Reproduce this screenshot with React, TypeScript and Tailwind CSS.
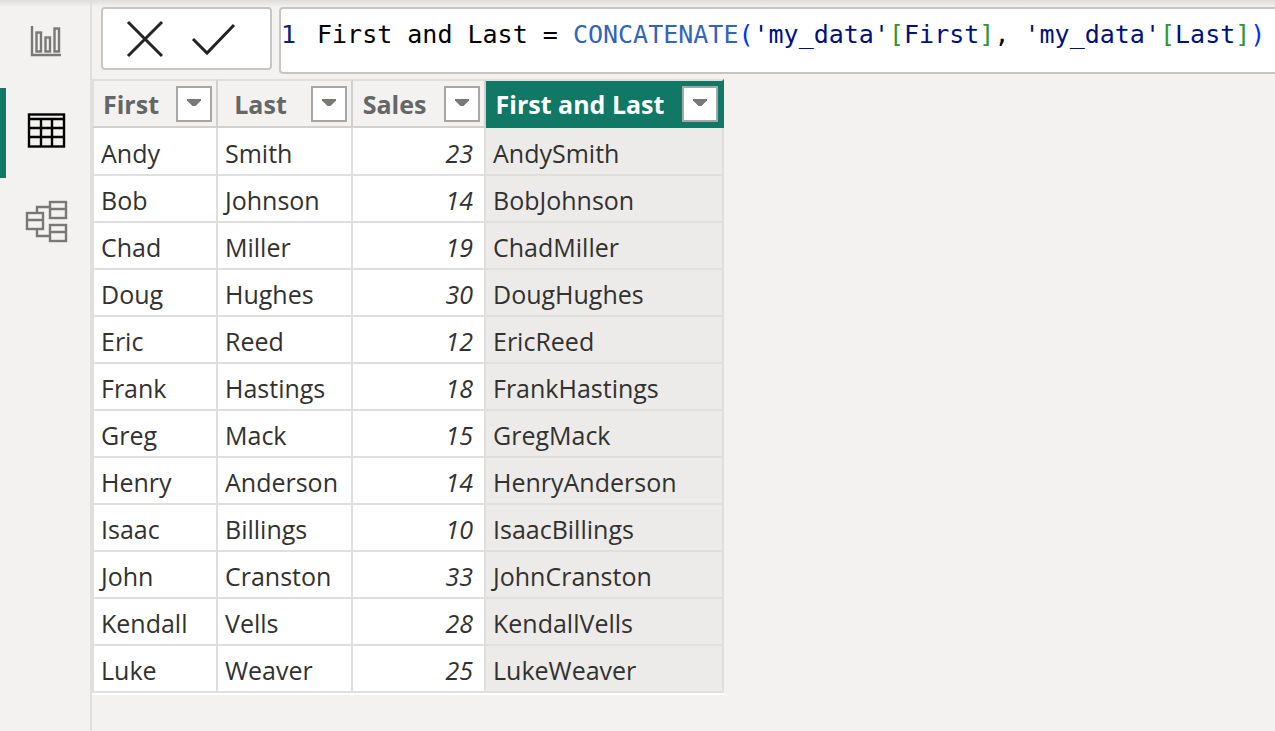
import type { ReactNode } from 'react'

interface Row {
  first: string
  last: string
  sales: number
}

const rows: Row[] = [
  { first: 'Andy', last: 'Smith', sales: 23 },
  { first: 'Bob', last: 'Johnson', sales: 14 },
  { first: 'Chad', last: 'Miller', sales: 19 },
  { first: 'Doug', last: 'Hughes', sales: 30 },
  { first: 'Eric', last: 'Reed', sales: 12 },
  { first: 'Frank', last: 'Hastings', sales: 18 },
  { first: 'Greg', last: 'Mack', sales: 15 },
  { first: 'Henry', last: 'Anderson', sales: 14 },
  { first: 'Isaac', last: 'Billings', sales: 10 },
  { first: 'John', last: 'Cranston', sales: 33 },
  { first: 'Kendall', last: 'Vells', sales: 28 },
  { first: 'Luke', last: 'Weaver', sales: 25 },
]

const columns = [
  { name: 'First', width: 'w-[126px]' },
  { name: 'Last', width: 'w-[135px]' },
  { name: 'Sales', width: 'w-[133px]' },
  { name: 'First and Last', width: 'w-[238px]', selected: true },
]

function ViewButton({ label, active, children }: { label: string; active?: boolean; children: ReactNode }) {
  return (
    <button
      type="button"
      aria-label={label}
      aria-pressed={!!active}
      className={`flex h-[90px] w-full items-center border-l-6 pl-4 ${
        active ? 'border-[#117865] text-black' : 'border-transparent text-[#7a7876]'
      }`}
    >
      <svg width="48" height="48" viewBox="0 0 48 48" fill="none" stroke="currentColor" strokeWidth="2.4">
        {children}
      </svg>
    </button>
  )
}

function Sidebar() {
  return (
    <nav aria-label="Views" className="-mt-[2px] w-[92px] shrink-0 border-r-2 border-[#e1dfdd]">
      <ViewButton label="Report view">
        <path d="M10 7V36H39" />
        <rect x="14.5" y="13.5" width="4.5" height="19" />
        <rect x="23.5" y="18.5" width="4.5" height="14" />
        <rect x="32.5" y="9.5" width="4.5" height="23" />
      </ViewButton>
      <ViewButton label="Table view" active>
        <rect x="7" y="5.5" width="35" height="32" />
        <path d="M7 10H42M7 19H42M7 28H42M19 10V38M30 10V38" />
      </ViewButton>
      <ViewButton label="Model view">
        <rect x="5" y="14" width="16" height="16" />
        <rect x="28" y="3" width="16" height="16" />
        <rect x="28" y="26" width="16" height="16" />
        <path d="M5 21H21M28 10H44M28 33H44M28 8H15V14M15 30V37H28" />
      </ViewButton>
    </nav>
  )
}

function FormulaBar() {
  return (
    <div className="flex items-start gap-[7px] pt-[7px] pl-[9px]">
      <div className="flex h-[63px] w-[171px] shrink-0 items-center rounded border-2 border-[#c8c6c4] bg-white pl-4">
        <button type="button" aria-label="Cancel" className="flex h-14 w-[52px] items-center justify-center">
          <svg width="40" height="40" viewBox="0 0 40 40" fill="none" stroke="#252423" strokeWidth="3">
            <path d="M3 3L37 37M37 3L3 37" />
          </svg>
        </button>
        <button type="button" aria-label="Commit" className="ml-4 flex h-14 w-[52px] items-center justify-center">
          <svg width="46" height="40" viewBox="0 0 46 40" fill="none" stroke="#252423" strokeWidth="3">
            <path d="M3 20L17 34L44 6" />
          </svg>
        </button>
      </div>
      <div className="flex h-[67px] min-w-0 flex-1 overflow-hidden rounded-l border-2 border-r-0 border-[#c8c6c4] bg-white pt-[9px] font-['DejaVu_Sans_Mono',monospace] text-[25px] leading-[34px] whitespace-pre">
        <span className="w-9 shrink-0 text-[#0b216f]">1</span>
        <code
          role="textbox"
          aria-label="Formula"
          contentEditable
          suppressContentEditableWarning
          spellCheck={false}
          className="font-['DejaVu_Sans_Mono',monospace] text-black"
        >
          First and Last = <span className="text-[#3165bb]">CONCATENATE</span>
          <span className="text-[#0431fa]">(</span>
          <span className="text-[#001080]">'my_data'</span>
          <span className="text-[#319331]">[</span>
          <span className="text-[#001080]">First</span>
          <span className="text-[#319331]">]</span>,{' '}
          <span className="text-[#001080]">'my_data'</span>
          <span className="text-[#319331]">[</span>
          <span className="text-[#001080]">Last</span>
          <span className="text-[#319331]">]</span>
          <span className="text-[#0431fa]">)</span>
        </code>
      </div>
    </div>
  )
}

function DataTable() {
  return (
    <table className="mt-[5px] w-[632px] table-fixed border-separate border-spacing-0 border-b-2 border-b-white text-[#323130]">
      <thead>
        <tr>
          {columns.map(({ name, width, selected }) => (
            <th
              key={name}
              scope="col"
              className={`h-[49px] border-y-2 border-r-2 border-t-[#e1dfdd] p-0 font-bold first:border-l-2 first:border-l-[#e1dfdd] ${width} ${
                selected
                  ? 'border-r-[#117865] border-b-[#117865] bg-[#117865] text-white'
                  : 'border-r-[#d2d0ce] border-b-[#d2d0ce] text-[#666666]'
              }`}
            >
              <div className="flex items-center pr-1">
                <span className="flex-1 pr-2 text-center whitespace-nowrap">{name}</span>
                <button
                  type="button"
                  aria-label={`Filter ${name}`}
                  className="flex size-9 shrink-0 items-center justify-center border-2 border-[#a6a6a6] bg-white"
                >
                  <svg width="16" height="10" viewBox="0 0 16 10" fill="#7a7876">
                    <path d="M1 0H15V1.5L9.5 7H6.5L1 1.5Z" />
                  </svg>
                </button>
              </div>
            </th>
          ))}
        </tr>
      </thead>
      <tbody>
        {rows.map(({ first, last, sales }) => (
          <tr
            key={first}
            className="*:h-[47px] *:border-r-2 *:border-b-2 *:border-[#e1dfdd] *:px-[7px] *:pt-[3px] *:pb-0 *:leading-[34px] first:*:h-12"
          >
            <td className="border-l-2 bg-white">{first}</td>
            <td className="bg-white">{last}</td>
            <td className="bg-white text-right italic">
              <span className="pr-1">{sales}</span>
            </td>
            <td className="bg-[#edebe9]">
              {first}
              {last}
            </td>
          </tr>
        ))}
      </tbody>
    </table>
  )
}

export default function App() {
  return (
    <div className="relative flex min-h-screen bg-[#f3f2f1] font-['Open_Sans',sans-serif] text-[25px] leading-[34px]">
      <div className="pointer-events-none absolute inset-x-0 top-0 h-[7px] bg-linear-to-b from-[#dedddc] to-transparent" />
      <Sidebar />
      <main className="min-w-0 flex-1">
        <FormulaBar />
        <DataTable />
      </main>
    </div>
  )
}
